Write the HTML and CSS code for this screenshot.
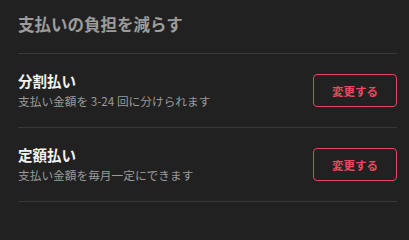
FILE: index.html
```html
<!DOCTYPE html>
<html lang="ja">
<head>
<meta charset="utf-8">
<link rel="stylesheet" href="styles.css">
</head>
<body>
<div class="panel">
  <div class="header"><h2 class="title">支払いの負担を減らす</h2></div>
  <div class="row">
    <div class="info">
      <div class="name">分割払い</div>
      <div class="desc">支払い金額を 3-24 回に分けられます</div>
    </div>
    <button class="btn">変更する</button>
  </div>
  <div class="row">
    <div class="info">
      <div class="name">定額払い</div>
      <div class="desc">支払い金額を毎月一定にできます</div>
    </div>
    <button class="btn">変更する</button>
  </div>
</div>
</body>
</html>
```
FILE: styles.css
```css
html, body {
  margin: 0;
  padding: 0;
  background: #212121;
}
body {
  font-family: "Noto Sans CJK JP", "Noto Sans", sans-serif;
}
.panel {
  padding: 0 12px 0 18px;
}
.header {
  height: 41px;
  padding-top: 12px;
  border-bottom: 1px solid #383838;
}
.title {
  margin: 0;
  font-size: 16.5px;
  line-height: 24px;
  font-weight: 700;
  color: #9c9c9c;
}
.row {
  height: 73px;
  display: flex;
  align-items: center;
  justify-content: space-between;
  border-bottom: 1px solid #383838;
}
.info {
  display: flex;
  flex-direction: column;
  gap: 1px;
}
.name {
  font-size: 14.5px;
  line-height: 20px;
  font-weight: 700;
  color: #f2f2f2;
}
.desc {
  font-size: 11.7px;
  line-height: 18px;
  color: #9a9a9a;
}
.btn {
  width: 84px;
  height: 33px;
  margin-right: 0;
  background: transparent;
  border: 1.5px solid #e2475d;
  border-radius: 4px;
  color: #e8495f;
  font-family: "Noto Sans CJK JP", sans-serif;
  font-size: 11.5px;
  font-weight: 700;
  padding: 0;
}
```
